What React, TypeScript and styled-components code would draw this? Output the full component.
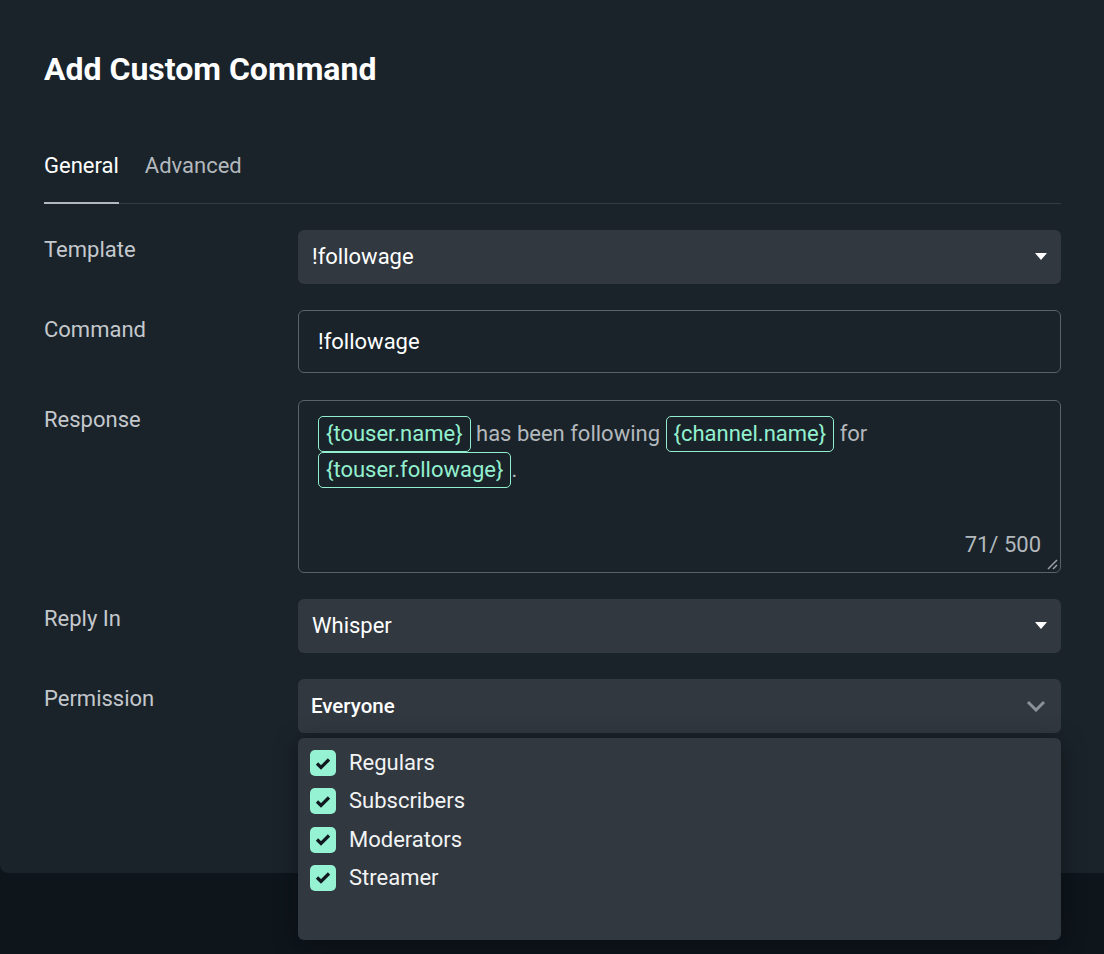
import React from 'react'
import styled, { createGlobalStyle } from 'styled-components'

const GlobalStyle = createGlobalStyle`
  html, body {
    margin: 0;
    padding: 0;
    background: #0e151b;
    font-family: Roboto, "Noto Sans", "Liberation Sans", sans-serif;
  }
`

const Page = styled.div`
  width: 1104px;
  height: 954px;
  overflow: hidden;
`

const Panel = styled.div`
  background: #1a232a;
  width: 1140px;
  height: 873px;
  box-sizing: border-box;
  padding: 50px 0 0 44px;
  border-radius: 0 0 8px 8px;
`

const Content = styled.div`
  width: 1017px;
`

const Title = styled.h1`
  margin: 0;
  color: #ffffff;
  font-size: 32px;
  font-weight: 700;
  line-height: 38px;
`

const Tabs = styled.div`
  display: flex;
  gap: 26px;
  margin-top: 65px;
  border-bottom: 1px solid #343b42;
`

const Tab = styled.div<{ $active?: boolean }>`
  font-size: 22px;
  line-height: 26px;
  padding-bottom: 23px;
  color: ${(p) => (p.$active ? '#ffffff' : '#b3b8bd')};
  border-bottom: 2px solid ${(p) => (p.$active ? '#b3b8bd' : 'transparent')};
  margin-bottom: -1px;
`

const Form = styled.div`
  display: flex;
  flex-direction: column;
  gap: 26.5px;
  margin-top: 26px;
`

const Row = styled.div`
  display: grid;
  grid-template-columns: 254px 763px;
  align-items: start;
  position: relative;
`

const Label = styled.div`
  color: #c4c8cd;
  font-size: 22px;
  line-height: 26px;
  padding-top: 7px;
`

const Select = styled.div<{ $bold?: boolean }>`
  height: 53.5px;
  background: #31383f;
  border-radius: 6px;
  display: flex;
  align-items: center;
  justify-content: space-between;
  padding: 0 ${(p) => (p.$bold ? '15px' : '14px')} 0 ${(p) => (p.$bold ? '13px' : '14px')};
  box-sizing: border-box;
  color: #ffffff;
  font-size: ${(p) => (p.$bold ? '20.5px' : '22px')};
  font-weight: ${(p) => (p.$bold ? 500 : 400)};
`

const Input = styled.div`
  height: 63px;
  border: 1px solid #59616a;
  border-radius: 6px;
  box-sizing: border-box;
  display: flex;
  align-items: center;
  padding: 0 19px;
  color: #ffffff;
  font-size: 22px;
`

const TextArea = styled.div`
  height: 173px;
  border: 1px solid #59616a;
  border-radius: 6px;
  box-sizing: border-box;
  padding: 15px 19px;
  position: relative;
  color: #b3b8bd;
  font-size: 22px;
  line-height: 34px;
`

const Tag = styled.span`
  display: inline-block;
  border: 1px solid #93f0cf;
  border-radius: 5px;
  color: #93f0cf;
  padding: 0 7px;
  line-height: 34px;
`

const Counter = styled.div`
  position: absolute;
  right: 19px;
  bottom: 14px;
  color: #b3b8bd;
  font-size: 22px;
  line-height: 26px;
`

const Resize = styled.svg`
  position: absolute;
  right: 2px;
  bottom: 2px;
`

const Menu = styled.div`
  position: absolute;
  top: 59px;
  left: 254px;
  width: 763px;
  height: 202px;
  background: #31383f;
  border-radius: 6px;
  box-sizing: border-box;
  padding: 12px 12px;
  display: flex;
  flex-direction: column;
  gap: 12.3px;
  box-shadow: 0 4px 24px rgba(0, 0, 0, 0.35);
`

const Option = styled.div`
  display: flex;
  align-items: center;
  gap: 13px;
  color: #f2f3f4;
  font-size: 22px;
  line-height: 26px;
`

const Check = styled.span`
  width: 26px;
  height: 26px;
  border-radius: 5px;
  background: #95f2d2;
  display: flex;
  align-items: center;
  justify-content: center;
`

const Caret = () => (
  <svg width="12" height="7" viewBox="0 0 12 7">
    <path d="M0 0 H12 L6 7 Z" fill="#ffffff" />
  </svg>
)

const Chevron = () => (
  <svg width="20" height="12" viewBox="0 0 20 12">
    <path d="M2 2 L10 10 L18 2" fill="none" stroke="#8b9197" strokeWidth="3" />
  </svg>
)

const Tick = () => (
  <svg width="16" height="13" viewBox="0 0 16 13">
    <path d="M2 6.5 L6 10.5 L14 2.5" fill="none" stroke="#111820" strokeWidth="3.2" />
  </svg>
)

const options = ['Regulars', 'Subscribers', 'Moderators', 'Streamer']

const App: React.FC = () => {
  return (
    <Page>
      <GlobalStyle />
      <Panel>
        <Content>
          <Title>Add Custom Command</Title>
          <Tabs>
            <Tab $active>General</Tab>
            <Tab>Advanced</Tab>
          </Tabs>
          <Form>
            <Row>
              <Label>Template</Label>
              <Select>
                !followage
                <Caret />
              </Select>
            </Row>
            <Row>
              <Label>Command</Label>
              <Input>!followage</Input>
            </Row>
            <Row>
              <Label>Response</Label>
              <TextArea>
                <Tag>{'{touser.name}'}</Tag> has been following <Tag>{'{channel.name}'}</Tag> for{' '}
                <Tag>{'{touser.followage}'}</Tag>.
                <Counter>71/ 500</Counter>
                <Resize width="12" height="12" viewBox="0 0 12 12">
                  <path d="M2 11 L11 2 M7 11 L11 7" stroke="#9aa0a6" strokeWidth="1.5" />
                </Resize>
              </TextArea>
            </Row>
            <Row>
              <Label>Reply In</Label>
              <Select>
                Whisper
                <Caret />
              </Select>
            </Row>
            <Row>
              <Label>Permission</Label>
              <Select $bold>
                Everyone
                <Chevron />
              </Select>
              <Menu>
                {options.map((o) => (
                  <Option key={o}>
                    <Check>
                      <Tick />
                    </Check>
                    {o}
                  </Option>
                ))}
              </Menu>
            </Row>
          </Form>
        </Content>
      </Panel>
    </Page>
  )
}

export default App
